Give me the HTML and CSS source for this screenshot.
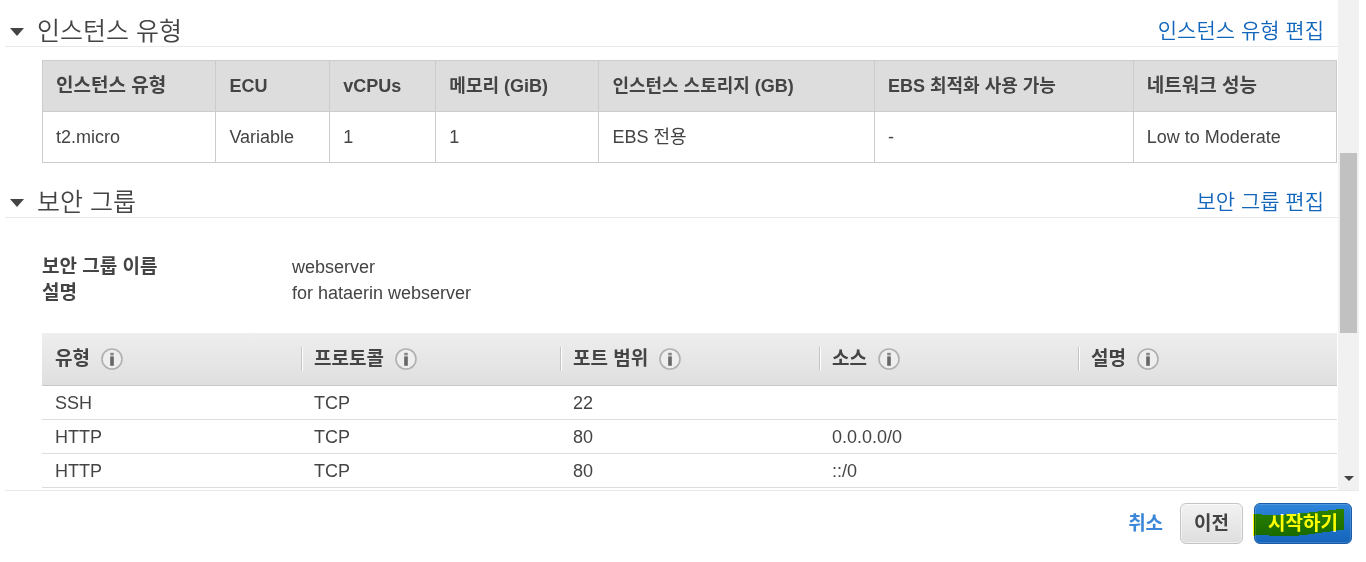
FILE: index.html
```html
<!DOCTYPE html>
<html lang="ko">
<head>
  <meta charset="UTF-8" />
  <title>인스턴스 시작 검토</title>
  <link rel="stylesheet" href="styles.css">
</head>
<body>

  <svg class="defs" aria-hidden="true">
    <symbol id="info" viewBox="0 0 22 22">
      <circle cx="11" cy="11" r="10" fill="#eee" stroke="#b0b0b0" stroke-width="1.6"/>
      <rect x="9.2" y="4.8" width="3.6" height="2.6" fill="#888"/>
      <rect x="9.2" y="8.4" width="3.6" height="9.4" fill="#666"/>
    </symbol>
    <symbol id="arrow" viewBox="0 0 14 9">
      <path d="M0 1h14L7 9z" fill="#444"/>
    </symbol>
  </svg>

  <div class="wizard">
    <div class="review">
      <main class="content">

        <section>
          <div class="section-head">
            <h2><button class="toggle"><svg class="arrow"><use href="#arrow"/></svg>인스턴스 유형</button></h2>
            <a class="edit" href="#">인스턴스 유형 편집</a>
          </div>
          <table class="instance">
            <colgroup>
              <col class="c-type"><col class="c-ecu"><col class="c-cpu"><col class="c-mem">
              <col class="c-storage"><col class="c-ebs"><col class="c-net">
            </colgroup>
            <thead>
              <tr>
                <th class="ko">인스턴스 유형</th>
                <th>ECU</th>
                <th>vCPUs</th>
                <th>메모리 (GiB)</th>
                <th>인스턴스 스토리지 (GB)</th>
                <th>EBS 최적화 사용 가능</th>
                <th class="ko">네트워크 성능</th>
              </tr>
            </thead>
            <tbody>
              <tr>
                <td>t2.micro</td>
                <td>Variable</td>
                <td>1</td>
                <td>1</td>
                <td>EBS 전용</td>
                <td>-</td>
                <td>Low to Moderate</td>
              </tr>
            </tbody>
          </table>
        </section>

        <section class="security">
          <div class="section-head">
            <h2><button class="toggle"><svg class="arrow"><use href="#arrow"/></svg>보안 그룹</button></h2>
            <a class="edit" href="#">보안 그룹 편집</a>
          </div>
          <dl class="group">
            <dt>보안 그룹 이름</dt>
            <dd>webserver</dd>
            <dt>설명</dt>
            <dd>for hataerin webserver</dd>
          </dl>
          <table class="rules">
            <thead>
              <tr>
                <th><span class="label">유형<svg class="info"><use href="#info"/></svg></span></th>
                <th><span class="label">프로토콜<svg class="info"><use href="#info"/></svg></span></th>
                <th><span class="label">포트 범위<svg class="info"><use href="#info"/></svg></span></th>
                <th><span class="label">소스<svg class="info"><use href="#info"/></svg></span></th>
                <th><span class="label">설명<svg class="info"><use href="#info"/></svg></span></th>
              </tr>
            </thead>
            <tbody>
              <tr><td>SSH</td><td>TCP</td><td>22</td><td></td><td></td></tr>
              <tr><td>HTTP</td><td>TCP</td><td>80</td><td>0.0.0.0/0</td><td></td></tr>
              <tr><td>HTTP</td><td>TCP</td><td>80</td><td>::/0</td><td></td></tr>
            </tbody>
          </table>
        </section>

      </main>

      <div class="scrollbar">
        <div class="thumb"></div>
        <svg class="down" viewBox="0 0 10 5"><path d="M0 0h10L5 5z" fill="#444"/></svg>
      </div>
    </div>

    <footer class="actions">
      <a class="cancel" href="#">취소</a>
      <button class="btn">이전</button>
      <button class="btn primary">시작하기
        <svg class="marker" viewBox="0 0 92 28"><path d="M0 5H9V6H32V5H46V4H56V3H65V2H75V1H83V0H91V21H84V22H77V23H69V24H62V25H55V26H46V27H16V26H2V27H0z" fill="#ff0"/></svg>
      </button>
    </footer>
  </div>

</body>
</html>
```

FILE: styles.css
```css
body {
  margin: 0;
  font-family: "Liberation Sans", "Noto Sans CJK KR", sans-serif;
  font-size: 18px;
  line-height: 26px;
  color: #444;
  background: #fff;
}

.defs {
  display: none;
}

.wizard {
  padding: 0 7px 0 5px;
}

.review {
  display: flex;
  border-bottom: 1px solid #eaeaea;
}

.content {
  flex: 1;
  padding-bottom: 2px;
}

/* section titles */
.section-head {
  display: flex;
  justify-content: space-between;
  align-items: center;
  padding: 16px 14px 0 5px;
  border-bottom: 1px solid #eaeaea;
}

h2 {
  margin: 0;
  font-size: 25px;
  font-weight: normal;
  line-height: 30px;
}

.toggle {
  display: flex;
  align-items: center;
  gap: 13px;
  padding: 0;
  border: none;
  background: none;
  font: inherit;
  font-weight: 350;
  color: inherit;
  cursor: pointer;
}

.arrow {
  width: 14px;
  height: 9px;
}

.edit {
  font-size: 21px;
  font-weight: 350;
  line-height: 30px;
  color: #1166bb;
  text-decoration: none;
}

.edit:hover, .cancel:hover {
  text-decoration: underline;
}

table {
  border-collapse: collapse;
  table-layout: fixed;
}

th {
  font-size: 18px;
  text-align: left;
}

/* instance type */
.instance {
  width: calc(100% - 38px);
  margin: 13px 1px 0 37px;
}

.instance th, .instance td {
  height: 50px;
  padding: 0 13px;
  border: 1px solid #ccc;
  white-space: nowrap;
}

.instance th {
  background: #ddd;
}

.instance .ko {
  font-size: 19px;
}

.c-type { width: 13.4%; }
.c-ecu { width: 8.8%; }
.c-cpu { width: 8.2%; }
.c-mem { width: 12.6%; }
.c-storage { width: 21.3%; }
.c-ebs { width: 20%; }
.c-net { width: 15.7%; }

/* security group */
.security {
  margin-top: 8px;
}

.group {
  display: grid;
  grid-template-columns: 250px 1fr;
  margin: 36px 0 27px 37px;
}

.group dt {
  font-size: 19px;
  font-weight: bold;
}

.group dd {
  margin: 0;
}

.rules {
  width: calc(100% - 38px);
  margin: 0 1px 0 37px;
  border-collapse: separate;
  border-spacing: 0;
}

.rules thead tr {
  background: linear-gradient(#eee, #dfdfdf);
}

.rules th {
  height: 52px;
  padding: 0 13px;
  border-bottom: 1px solid #c8c8c8;
  font-size: 19px;
}

.rules th + th {
  background: linear-gradient(to right, #c4c4c4 50%, #fff 50%) left center / 2px 24px no-repeat;
}

.label {
  display: flex;
  align-items: center;
  gap: 11px;
}

.info {
  width: 22px;
  height: 22px;
}

.rules td {
  height: 33px;
  padding: 0 13px;
  border-bottom: 1px solid #ddd;
}

/* scrollbar */
.scrollbar {
  display: flex;
  flex-direction: column;
  align-items: center;
  justify-content: space-between;
  width: 21px;
  padding: 153px 0 9px;
  box-sizing: border-box;
  background: #f1f1f1;
}

.thumb {
  width: 17px;
  height: 180px;
  background: #c1c1c1;
}

.down {
  width: 10px;
  height: 5px;
}

/* bottom buttons */
.actions {
  display: flex;
  justify-content: flex-end;
  align-items: center;
  padding: 12px 7px;
}

.cancel {
  margin-right: 17px;
  font-size: 19px;
  font-weight: bold;
  color: #3b86d8;
  text-decoration: none;
}

.btn {
  height: 41px;
  padding: 0 13px;
  border: 1px solid #c4c4c4;
  border-radius: 6px;
  background: linear-gradient(#f2f2f2, #dedede);
  box-shadow: inset 0 0 0 1px rgba(255, 255, 255, 0.5);
  font-family: inherit;
  font-size: 19px;
  font-weight: bold;
  line-height: 36px;
  color: #444;
  cursor: pointer;
}

.primary {
  position: relative;
  margin-left: 11px;
  border-color: #1c5ba5;
  background: linear-gradient(#2e85da, #1464bb);
  box-shadow: inset 0 0 0 1px rgba(255, 255, 255, 0.15);
  color: #fff;
}

/* highlighter stroke over the launch button */
.marker {
  position: absolute;
  left: -2px;
  top: 5px;
  width: 92px;
  height: 28px;
  mix-blend-mode: multiply;
  pointer-events: none;
}
```
